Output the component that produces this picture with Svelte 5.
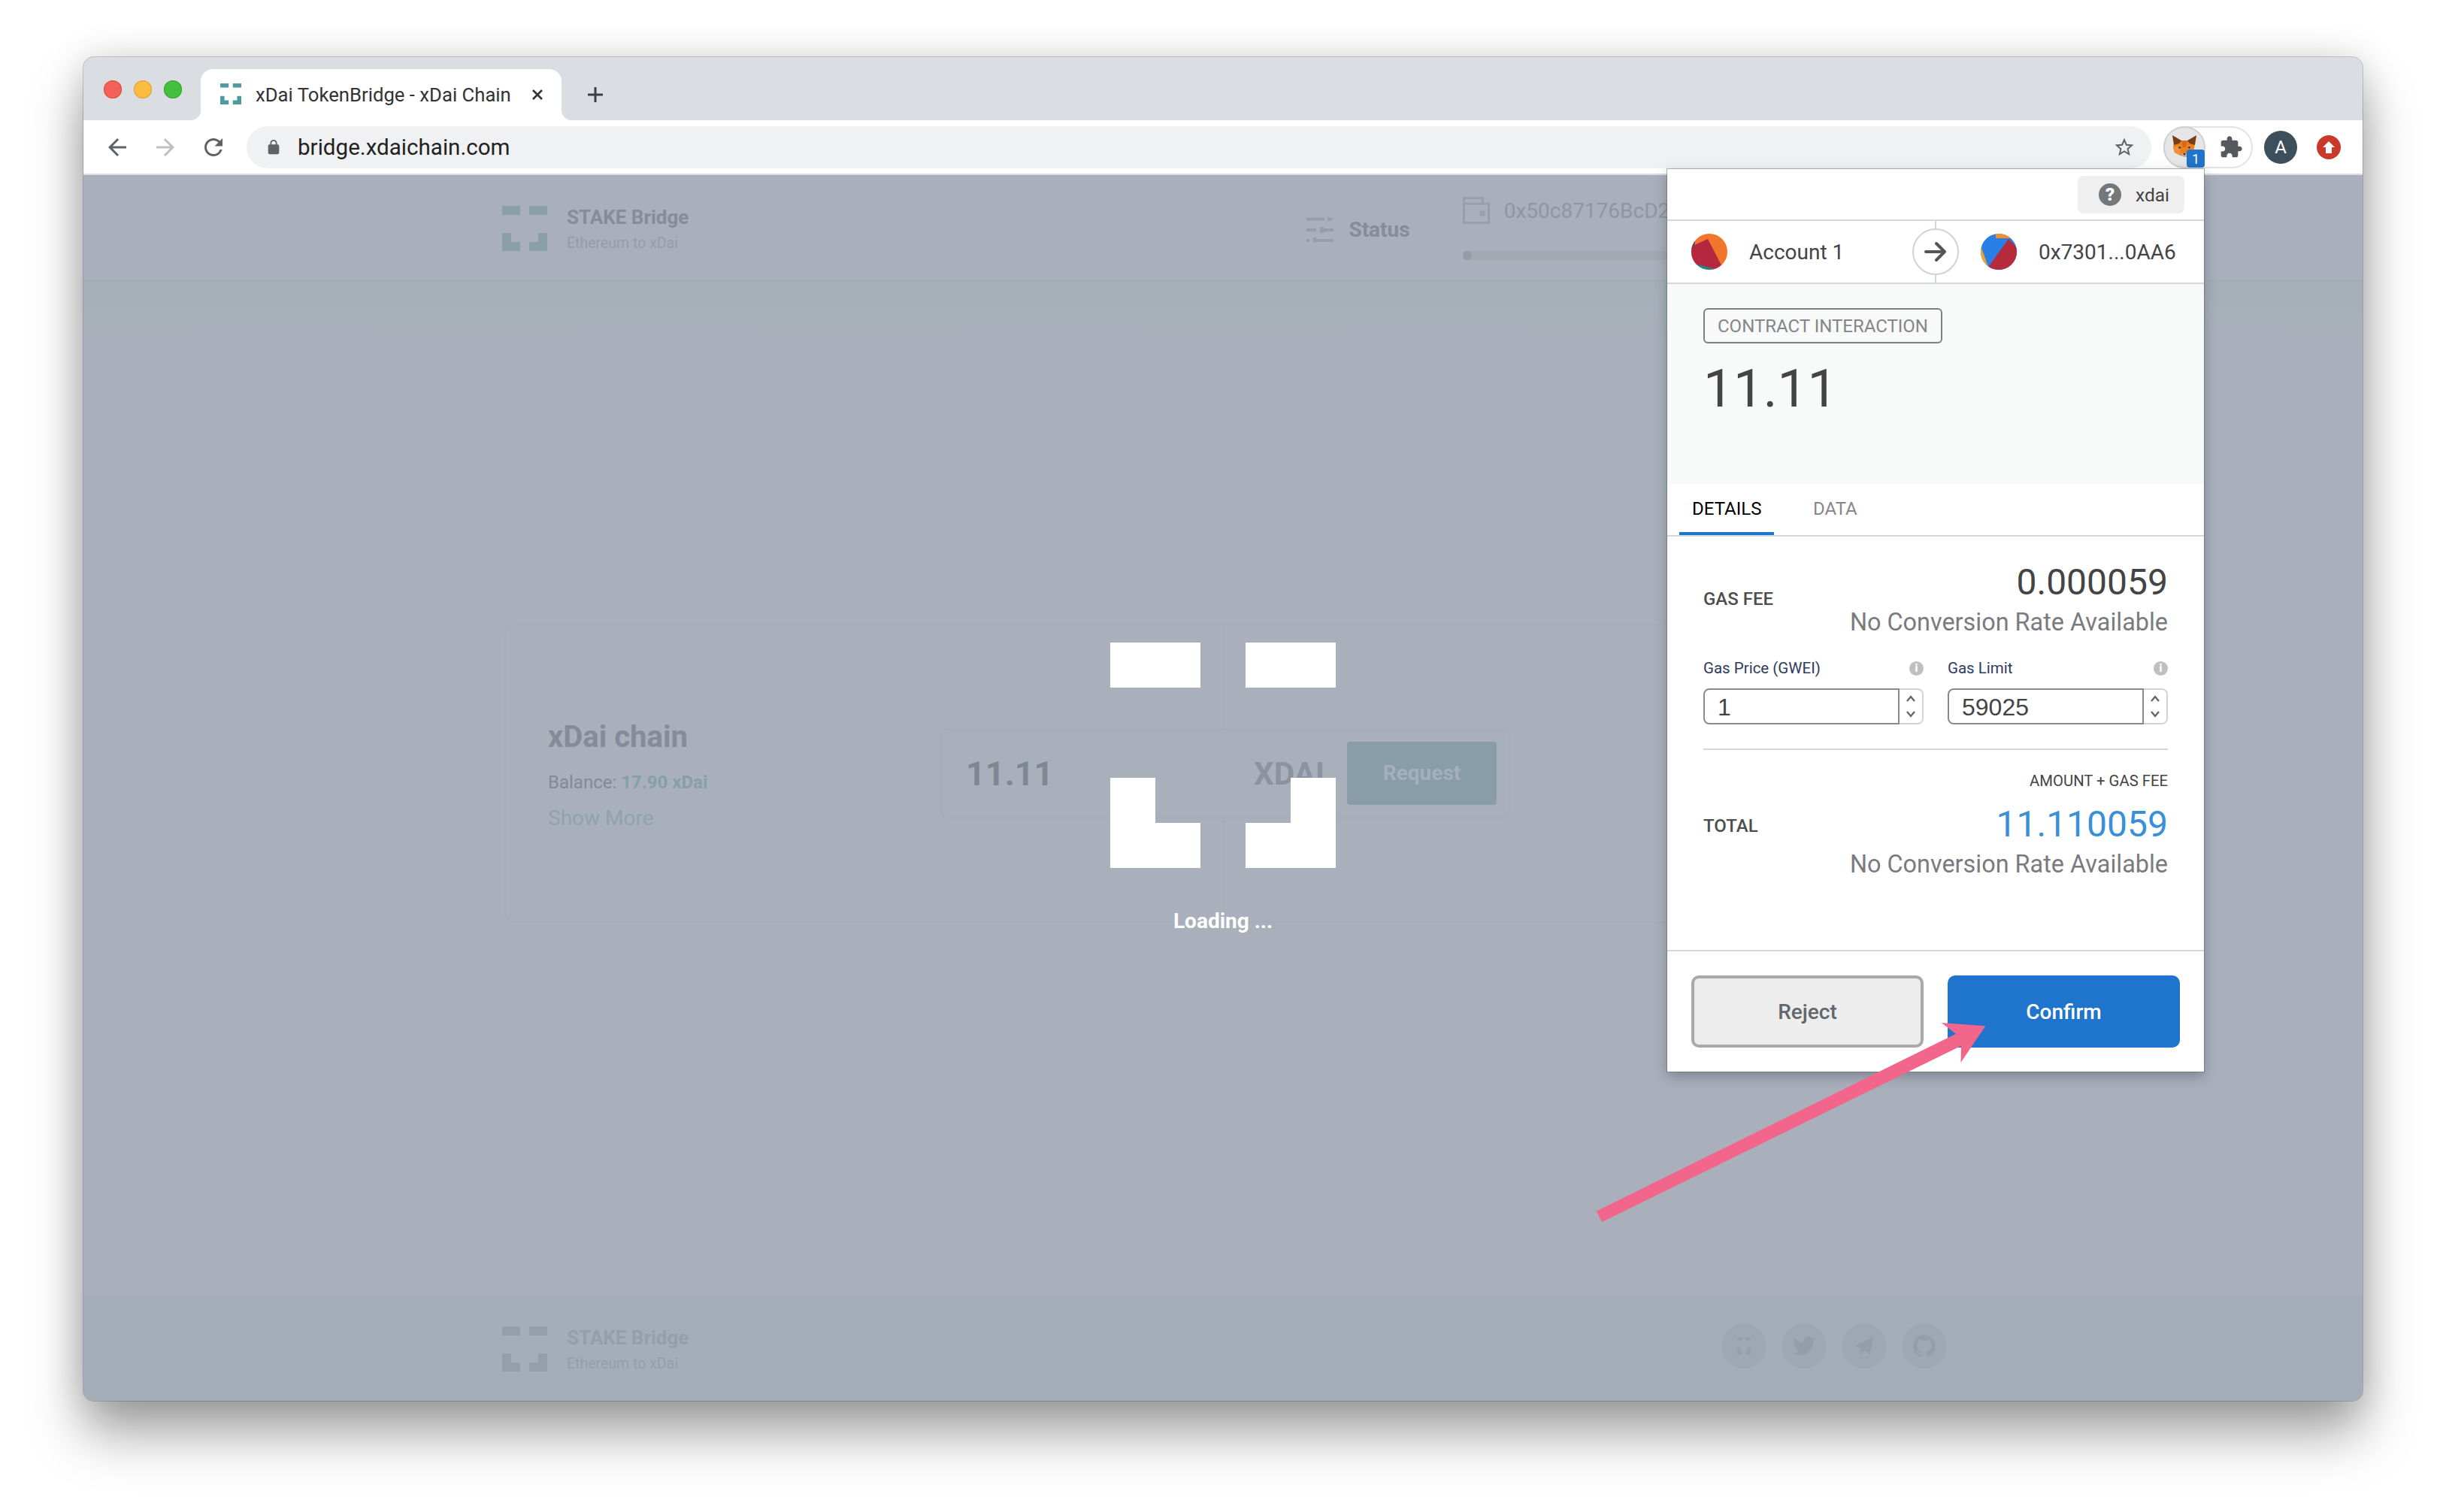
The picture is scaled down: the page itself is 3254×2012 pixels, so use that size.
<script>
	const socials = [
		{ name: 'site', d: 'M5 3h5v3H5zM14 3h5v3h-5zM5 14h3v4h2v3H5zM16 14h3v7h-5v-3h2z' },
		{
			name: 'twitter',
			d: 'M23.953 4.57a10 10 0 01-2.825.775 4.958 4.958 0 002.163-2.723c-.951.555-2.005.959-3.127 1.184a4.92 4.92 0 00-8.384 4.482C7.69 8.095 4.067 6.13 1.64 3.162a4.822 4.822 0 00-.666 2.475c0 1.71.87 3.213 2.188 4.096a4.904 4.904 0 01-2.228-.616v.06a4.923 4.923 0 003.946 4.827 4.996 4.996 0 01-2.212.085 4.936 4.936 0 004.604 3.417 9.867 9.867 0 01-6.102 2.105c-.39 0-.779-.023-1.17-.067a13.995 13.995 0 007.557 2.209c9.053 0 13.998-7.496 13.998-13.985 0-.21 0-.42-.015-.63A9.935 9.935 0 0024 4.59z'
		},
		{ name: 'telegram', d: 'M22 2 2 12l6 2 1 7 3-4 6 4z' },
		{
			name: 'github',
			d: 'M12 .3a12 12 0 0 0-3.8 23.4c.6.1.8-.3.8-.6v-2c-3.3.7-4-1.6-4-1.6-.6-1.4-1.4-1.8-1.4-1.8-1.1-.7.1-.7.1-.7 1.2.1 1.8 1.2 1.8 1.2 1.1 1.8 2.8 1.3 3.5 1 .1-.8.4-1.3.8-1.6-2.7-.3-5.5-1.3-5.5-5.9 0-1.3.5-2.4 1.2-3.2-.1-.3-.5-1.5.1-3.2 0 0 1-.3 3.3 1.2a11.5 11.5 0 0 1 6 0c2.3-1.5 3.3-1.2 3.3-1.2.7 1.7.2 2.9.1 3.2.8.8 1.2 1.9 1.2 3.2 0 4.6-2.8 5.6-5.5 5.9.4.4.8 1.1.8 2.2v3.3c0 .3.2.7.8.6A12 12 0 0 0 12 .3z'
		}
	];
	const gasFields = [
		{ label: 'Gas Price (GWEI)', value: '1' },
		{ label: 'Gas Limit', value: '59025' }
	];
</script>

{#snippet logo(cls)}
	<svg class={cls} viewBox="0 0 5 5" aria-hidden="true">
		<path d="M0 0h2v1H0zM3 0h2v1H3zM0 3h1v1h1v1H0zM4 3h1v2H3V4h1z" />
	</svg>
{/snippet}

{#snippet brand()}
	<div class="brand">
		{@render logo('brand-logo')}
		<div class="brand-text">
			<div class="brand-name">STAKE Bridge</div>
			<div class="brand-sub">Ethereum to xDai</div>
		</div>
	</div>
{/snippet}

<div class="screen">
	<div class="window">
		<div class="tabstrip">
			<div class="lights">
				<span class="light red"></span>
				<span class="light yellow"></span>
				<span class="light green"></span>
			</div>
			<div class="tab">
				{@render logo('favicon')}
				<span class="tab-title">xDai TokenBridge - xDai Chain</span>
				<svg class="tab-close" viewBox="0 0 16 16"><path d="M2 2l12 12M14 2L2 14" /></svg>
			</div>
			<svg class="new-tab" viewBox="0 0 24 24"><path d="M12 2v20M2 12h20" /></svg>
		</div>

		<div class="toolbar">
			<div class="nav">
				<svg viewBox="0 0 24 24"><path d="M20 11H7.83l5.59-5.59L12 4l-8 8 8 8 1.41-1.41L7.83 13H20v-2z" /></svg>
				<svg class="off" viewBox="0 0 24 24"><path d="M4 11h12.17l-5.59-5.59L12 4l8 8-8 8-1.41-1.41L16.17 13H4v-2z" /></svg>
				<svg viewBox="0 0 24 24"><path d="M17.65 6.35A7.958 7.958 0 0 0 12 4c-4.42 0-7.99 3.58-7.99 8s3.57 8 7.99 8c3.73 0 6.84-2.55 7.73-6h-2.08A5.99 5.99 0 0 1 12 18c-3.31 0-6-2.69-6-6s2.69-6 6-6c1.66 0 3.14.69 4.22 1.78L13 11h7V4l-2.35 2.35z" /></svg>
			</div>
			<div class="urlbar">
				<svg class="lock" viewBox="0 0 24 24"><path d="M18 8h-1V6c0-2.76-2.24-5-5-5S7 3.24 7 6v2H6c-1.1 0-2 .9-2 2v10c0 1.1.9 2 2 2h12c1.1 0 2-.9 2-2V10c0-1.1-.9-2-2-2zM9 6c0-1.66 1.34-3 3-3s3 1.34 3 3v2H9V6z" /></svg>
				<span class="url">bridge.xdaichain.com</span>
				<svg class="star" viewBox="0 0 24 24"><path d="M22 9.24l-7.19-.62L12 2 9.19 8.63 2 9.24l5.46 4.73L5.82 21 12 17.27 18.18 21l-1.63-7.03L22 9.24zM12 15.4l-3.76 2.27 1-4.28-3.32-2.88 4.38-.38L12 6.1l1.71 4.04 4.38.38-3.32 2.88 1 4.28L12 15.4z" /></svg>
			</div>
			<div class="ext-pill">
				<div class="fox-wrap">
					<svg class="fox" viewBox="0 0 32 29">
						<polygon fill="#e8821e" points="2,10 12,7 20,7 30,10 29,18 23,25 18,29 11,27 3,23 1,16" />
						<polygon fill="#763d16" points="0,0 12,7 9,11 2,13" />
						<polygon fill="#763d16" points="32,0 20,7 23,11 30,13" />
						<polygon fill="#d7691a" points="12,7 20,7 18,16 14,16" />
						<polygon fill="#f0913a" points="1,16 9,14 11,27 3,23" />
						<polygon fill="#c0ad9e" points="12,24 20,24 18,29 13,28" />
						<polygon fill="#233447" points="14,24 18,24 16,27" />
						<polygon fill="#233447" points="8,15 12,16 9,18" />
						<polygon fill="#233447" points="24,15 20,16 23,18" />
					</svg>
					<span class="ext-badge">1</span>
				</div>
				<svg class="puzzle" viewBox="0 0 24 24"><path d="M20.5 11H19V7c0-1.1-.9-2-2-2h-4V3.5C13 2.12 11.88 1 10.5 1S8 2.12 8 3.5V5H4c-1.1 0-1.99.9-1.99 2v3.8H3.5c1.49 0 2.7 1.21 2.7 2.7s-1.21 2.7-2.7 2.7H2V20c0 1.1.9 2 2 2h3.8v-1.5c0-1.49 1.21-2.7 2.7-2.7 1.49 0 2.7 1.21 2.7 2.7V22H17c1.1 0 2-.9 2-2v-4h1.5c1.38 0 2.5-1.12 2.5-2.5S21.88 11 20.5 11z" /></svg>
			</div>
			<div class="avatar">A</div>
			<svg class="update" viewBox="0 0 32 32">
				<circle cx="16" cy="16" r="16" fill="#c9392a" />
				<polygon fill="#fff" points="16,8 24,16 20,16 20,24 12,24 12,16 8,16" />
			</svg>
		</div>

		<div class="page">
			<header class="site-header">
				{@render brand()}
				<div class="status">
					<svg class="status-icon" viewBox="0 0 36 36">
						<path d="M0 2.500h24v4H0zM28 1l8 3.500-8 3.500zM0 17h13v4H0zM18 15h5v8h-5zM23 17h13v4H23zM0 31h4v4H0zM9 29h4v8H9zM13 31h23v4H13z" />
					</svg>
					<span>Status</span>
				</div>
				<div class="wallet">
					<div class="wallet-row">
						<svg class="wallet-icon" viewBox="0 0 36 36">
							<path d="M1.500 9V1.500h25V9M1.500 9h33v25.500h-33zM24 20h4v4h-4z" />
						</svg>
						<span class="wallet-addr">0x50c87176BcD2...</span>
					</div>
					<div class="wallet-bar"><span class="wallet-knob"></span></div>
				</div>
			</header>

			<main class="content">
				<section class="card">
					<div class="pane left">
						<div class="chain-name">xDai chain</div>
						<div class="balance">Balance: <b>17.90 xDai</b></div>
						<div class="show-more">Show More</div>
					</div>
					<div class="pane right"></div>
					<div class="amount">
						<span class="amount-value">11.11</span>
						<span class="amount-unit">XDAI</span>
						<span class="request">Request</span>
					</div>
				</section>
			</main>

			<footer class="site-footer">
				{@render brand()}
				<div class="socials">
					{#each socials as s}
						<span class="social">
							<svg viewBox="0 0 24 24"><path d={s.d} /></svg>
						</span>
					{/each}
				</div>
			</footer>

			<div class="loader">
				{@render logo('loader-logo')}
				<div class="loader-text">Loading ...</div>
			</div>
		</div>

		<div class="popup">
			<div class="popup-top">
				<div class="network">
					<span class="network-q">?</span>
					<span>xdai</span>
				</div>
			</div>
			<div class="accounts">
				<div class="account">
					<svg class="identicon" viewBox="0 0 48 48">
						<rect width="48" height="48" fill="#f1752a" />
						<polygon fill="#17636e" points="0,14 5,10 4,18 0,20" />
						<polygon fill="#25848c" points="4,38 34,44 30,48 8,48" />
						<polygon fill="#b5263f" points="0,17 22,7 40,42 32,47 5,40 0,34" />
					</svg>
					<span>Account 1</span>
				</div>
				<div class="flow">
					<span class="flow-circle">
						<svg viewBox="0 0 30 30"><path d="M2 15h25M16 4l11 11-11 11" /></svg>
					</span>
				</div>
				<div class="account">
					<svg class="identicon" viewBox="0 0 48 48">
						<rect width="48" height="48" fill="#2a7fe6" />
						<polygon fill="#f29029" points="20,0 40,0 40,6 20,6" />
						<polygon fill="#f0a52a" points="0,16 10,44 0,44" />
						<polygon fill="#b52b3c" points="37,7 48,18 48,48 8,48 11,43" />
					</svg>
					<span>0x7301...0AA6</span>
				</div>
			</div>
			<div class="summary">
				<div class="tag">CONTRACT INTERACTION</div>
				<div class="summary-amount">11.11</div>
			</div>
			<div class="tabs">
				<div class="tab-item active">DETAILS</div>
				<div class="tab-item">DATA</div>
			</div>
			<div class="details">
				<div class="fee-row">
					<div class="fee-label">GAS FEE</div>
					<div class="fee-values">
						<div class="fee-amount">0.000059</div>
						<div class="fee-note">No Conversion Rate Available</div>
					</div>
				</div>
				<div class="gas-fields">
					{#each gasFields as f}
						<div class="gas-field">
							<div class="gas-label">
								<span>{f.label}</span>
								<span class="info">i</span>
							</div>
							<div class="stepper">
								<input value={f.value} readonly />
								<span class="spin">
									<svg viewBox="0 0 14 12"><path d="M2 9l5-6 5 6" /></svg>
									<svg viewBox="0 0 14 12"><path d="M2 3l5 6 5-6" /></svg>
								</span>
							</div>
						</div>
					{/each}
				</div>
				<div class="rule"></div>
				<div class="total-sub">AMOUNT + GAS FEE</div>
				<div class="fee-row total">
					<div class="fee-label">TOTAL</div>
					<div class="fee-values">
						<div class="fee-amount blue">11.110059</div>
						<div class="fee-note">No Conversion Rate Available</div>
					</div>
				</div>
			</div>
			<div class="actions">
				<button class="btn reject">Reject</button>
				<button class="btn confirm">Confirm</button>
			</div>
		</div>

		<svg class="arrow" viewBox="111 76 3032 1788">
			<polygon
				fill="#f2668b"
				points="2123.600,1611.700 2602,1375.700 2582.700,1361 2641.400,1365.300 2608.500,1414 2609,1391.700 2131.300,1626"
			/>
		</svg>
	</div>
</div>

<style>
	:global(body) {
		background: #fff;
		font-family: Roboto, 'Liberation Sans', sans-serif;
	}

	.screen {
		height: 2012px;
		box-sizing: border-box;
		padding: 76px 0 0 111px;
		overflow: hidden;
	}

	.window {
		position: relative;
		display: flex;
		flex-direction: column;
		width: 3032px;
		height: 1788px;
		border-radius: 14px;
		box-shadow: 0 0 0 1px rgba(0, 0, 0, 0.18), 0 44px 70px rgba(0, 0, 0, 0.36), 0 0 50px rgba(0, 0, 0, 0.14);
		background: #a9b0bb;
		overflow: hidden;
	}

	.tabstrip {
		display: flex;
		align-items: flex-end;
		height: 84px;
		background: #dadde1;
		flex: none;
	}
	.lights {
		display: flex;
		gap: 16px;
		align-self: flex-start;
		margin: 31px 0 0 27px;
	}
	.light {
		width: 24px;
		height: 24px;
		border-radius: 50%;
	}
	.red {
		background: #f46158;
		box-shadow: inset 0 0 0 1px #dd4b43;
	}
	.yellow {
		background: #fbbc42;
		box-shadow: inset 0 0 0 1px #e0a030;
	}
	.green {
		background: #45c03e;
		box-shadow: inset 0 0 0 1px #33a42e;
	}
	.tab {
		position: relative;
		display: flex;
		align-items: center;
		width: 480px;
		height: 68px;
		margin-left: 25px;
		padding-left: 26px;
		box-sizing: border-box;
		background: #fff;
		border-radius: 16px 16px 0 0;
	}
	.tab::before,
	.tab::after {
		content: '';
		position: absolute;
		bottom: 0;
		width: 14px;
		height: 14px;
	}
	.tab::before {
		left: -14px;
		background: radial-gradient(circle at 0 0, transparent 14px, #fff 14.500px);
	}
	.tab::after {
		right: -14px;
		background: radial-gradient(circle at 100% 0, transparent 14px, #fff 14.500px);
	}
	.favicon {
		width: 28px;
		height: 28px;
		fill: #4f9a9e;
		margin-bottom: 2px;
		flex: none;
	}
	.tab-title {
		margin-left: 19px;
		font-size: 25.700px;
		color: #333;
		white-space: nowrap;
	}
	.tab-close {
		width: 16px;
		height: 16px;
		margin-left: auto;
		margin-right: 24px;
		fill: none;
		stroke: #333;
		stroke-width: 2.600;
	}
	.new-tab {
		width: 24px;
		height: 24px;
		margin: 0 0 22px 33px;
		fill: none;
		stroke: #3c4043;
		stroke-width: 3;
	}

	.toolbar {
		display: flex;
		align-items: center;
		flex: none;
		height: 73px;
		box-sizing: border-box;
		padding: 0 29px 0 0;
		background: #fff;
		border-bottom: 2px solid #dcdcdc;
	}
	.nav {
		display: flex;
		margin-left: 13px;
	}
	.nav svg {
		width: 36px;
		height: 36px;
		margin: 0 14px;
		fill: #5f6368;
	}
	.nav svg.off {
		fill: #bdc1c6;
	}
	.urlbar {
		display: flex;
		align-items: center;
		flex: 1;
		height: 56px;
		margin-left: 12px;
		padding: 0 21px 0 25px;
		background: #f0f1f3;
		border-radius: 28px;
	}
	.lock {
		width: 22px;
		height: 22px;
		fill: #5f6368;
	}
	.url {
		margin-left: 21px;
		font-size: 29.600px;
		color: #222;
	}
	.star {
		width: 30px;
		height: 30px;
		margin-left: auto;
		fill: #5f6368;
	}
	.ext-pill {
		display: flex;
		align-items: center;
		width: 119px;
		height: 56px;
		box-sizing: border-box;
		margin-left: 16px;
		border: 2px solid #e3e3e3;
		border-radius: 28px;
	}
	.fox-wrap {
		position: relative;
		display: flex;
		align-items: center;
		justify-content: center;
		width: 56px;
		height: 56px;
		margin-left: -2px;
		box-sizing: border-box;
		background: #e6e6e6;
		border: 2px solid #cfcfcf;
		border-radius: 50%;
		flex: none;
	}
	.fox {
		width: 32px;
		height: 29px;
		margin-bottom: 2px;
	}
	.ext-badge {
		position: absolute;
		right: -1px;
		bottom: -1px;
		width: 24px;
		height: 24px;
		background: #1f74cd;
		border-radius: 4px;
		color: #fff;
		font-size: 18px;
		line-height: 26px;
		text-align: center;
	}
	.puzzle {
		width: 32px;
		height: 32px;
		margin-left: 18px;
		fill: #55585d;
	}
	.avatar {
		width: 44px;
		height: 44px;
		margin-left: 15px;
		border-radius: 50%;
		background: #3d4f5a;
		color: #fff;
		font-size: 24px;
		line-height: 44px;
		text-align: center;
	}
	.update {
		width: 32px;
		height: 32px;
		margin-left: 26px;
	}

	.page {
		position: relative;
		display: flex;
		flex-direction: column;
		flex: 1;
		min-height: 0;
	}
	.site-header {
		display: flex;
		align-items: center;
		flex: none;
		height: 142px;
		box-sizing: border-box;
		padding: 6px 0 0 557px;
		border-bottom: 2px solid #a3adb6;
	}
	.brand {
		display: flex;
		gap: 26px;
		align-items: flex-start;
	}
	.brand-logo {
		width: 60px;
		height: 60px;
		fill: #8b9fa9;
	}
	.brand-text {
		display: flex;
		flex-direction: column;
		gap: 5px;
	}
	.brand-name {
		font-size: 26px;
		line-height: 30px;
		font-weight: 700;
		color: #868c98;
	}
	.brand-sub {
		font-size: 19.500px;
		line-height: 30px;
		color: #959ca8;
	}
	.status {
		display: flex;
		align-items: center;
		gap: 20px;
		margin: 0 0 2px 822px;
		font-size: 28px;
		font-weight: 700;
		color: #868c98;
	}
	.status-icon {
		width: 36px;
		height: 36px;
		fill: #979eaa;
	}
	.wallet {
		display: flex;
		flex-direction: column;
		gap: 36px;
		width: 639px;
		margin: 0 0 4px 70px;
	}
	.wallet-row {
		display: flex;
		align-items: center;
		gap: 19px;
	}
	.wallet-icon {
		width: 36px;
		height: 36px;
		fill: none;
		stroke: #979fab;
		stroke-width: 3;
	}
	.wallet-addr {
		font-size: 28px;
		color: #8f96a2;
		white-space: nowrap;
	}
	.wallet-bar {
		height: 12px;
		border-radius: 6px;
		background: #a2a9b3;
	}
	.wallet-knob {
		display: block;
		width: 12px;
		height: 12px;
		border-radius: 50%;
		background: #949ca8;
	}

	.content {
		flex: 1;
		background: linear-gradient(#a6b0b9, #a9b0bb 80px);
	}
	.card {
		display: grid;
		grid-template-columns: 1fr 1fr;
		width: 1915px;
		height: 398px;
		box-sizing: border-box;
		margin: 455px 0 0 560px;
		border: 2px solid #a5aeb8;
		border-radius: 16px;
	}
	.pane {
		grid-row: 1;
	}
	.left {
		grid-column: 1;
		display: flex;
		flex-direction: column;
		justify-content: center;
		padding: 6px 0 0 56px;
		border-right: 2px solid #a5aeb8;
	}
	.right {
		grid-column: 2;
	}
	.chain-name {
		font-size: 40px;
		line-height: 46px;
		font-weight: 700;
		color: #858c98;
	}
	.balance {
		margin-top: 20px;
		font-size: 24px;
		line-height: 34px;
		color: #838a96;
	}
	.balance b {
		color: #85a0a8;
	}
	.show-more {
		margin-top: 14px;
		font-size: 28px;
		line-height: 34px;
		color: #8ea3ab;
	}
	.amount {
		grid-row: 1;
		grid-column: 1 / 3;
		justify-self: center;
		align-self: center;
		display: flex;
		align-items: center;
		width: 757px;
		height: 119px;
		box-sizing: border-box;
		margin-left: 4px;
		padding: 0 16px 0 31px;
		border: 2px solid #a4adb7;
		border-radius: 8px;
		background: #a9b0bb;
		z-index: 1;
	}
	.amount-value {
		font-size: 45px;
		font-weight: 700;
		color: #7f8793;
	}
	.amount-unit {
		margin-left: auto;
		margin-right: 30px;
		font-size: 42px;
		font-weight: 700;
		color: #8c93a0;
	}
	.request {
		width: 199px;
		height: 84px;
		background: #889da8;
		border-radius: 4px;
		color: #a4b0bb;
		font-size: 28px;
		font-weight: 700;
		line-height: 84px;
		text-align: center;
	}

	.site-footer {
		display: flex;
		align-items: center;
		flex: none;
		height: 140px;
		box-sizing: border-box;
		padding: 6px 0 0 557px;
		background: #a4aeb8;
	}
	.site-footer .brand-logo {
		fill: #959eab;
	}
	.site-footer .brand-name,
	.site-footer .brand-sub {
		color: #959eab;
	}
	.socials {
		display: flex;
		gap: 20px;
		margin: 0 0 12px 1374px;
	}
	.social {
		display: flex;
		align-items: center;
		justify-content: center;
		width: 60px;
		height: 60px;
		border-radius: 50%;
		background: #9ea8b3;
	}
	.social svg {
		width: 30px;
		height: 30px;
		fill: #949eab;
	}

	.loader {
		position: absolute;
		inset: 0;
		display: flex;
		flex-direction: column;
		align-items: center;
		justify-content: center;
		z-index: 2;
	}
	.loader-logo {
		width: 300px;
		height: 300px;
		fill: #fff;
	}
	.loader-text {
		margin-top: 54px;
		font-size: 28px;
		line-height: 34px;
		font-weight: 700;
		color: #fff;
	}

	.popup {
		position: absolute;
		left: 2107px;
		top: 149px;
		width: 714px;
		height: 1201px;
		display: flex;
		flex-direction: column;
		background: #fff;
		box-shadow: 0 0 0 1px rgba(90, 100, 110, 0.5), 0 6px 16px rgba(40, 50, 60, 0.35);
		z-index: 3;
		color: #444;
	}
	.popup-top {
		display: flex;
		justify-content: flex-end;
		align-items: flex-start;
		flex: none;
		height: 69px;
		box-sizing: border-box;
		padding: 9px 26px 0 0;
		border-bottom: 2px solid #d2d8dd;
	}
	.network {
		display: flex;
		align-items: center;
		gap: 19px;
		width: 142px;
		height: 50px;
		box-sizing: border-box;
		padding-left: 28px;
		background: #efefef;
		border-radius: 8px;
		font-size: 24.500px;
	}
	.network-q {
		width: 30px;
		height: 30px;
		border-radius: 50%;
		background: #74787b;
		color: #fff;
		font-size: 24px;
		font-weight: 900;
		line-height: 31px;
		text-align: center;
	}
	.accounts {
		display: grid;
		grid-template-columns: 1fr 62px 1fr;
		flex: none;
		height: 84px;
		box-sizing: border-box;
		border-bottom: 2px solid #d2d8dd;
	}
	.account {
		display: flex;
		align-items: center;
		gap: 29px;
		padding-left: 32px;
		font-size: 28px;
	}
	.account:last-child {
		padding-left: 29px;
		gap: 29px;
	}
	.identicon {
		width: 48px;
		height: 48px;
		border-radius: 50%;
		flex: none;
	}
	.flow {
		display: flex;
		align-items: center;
		background: linear-gradient(#d2d8dd, #d2d8dd) center / 2px 100% no-repeat;
	}
	.flow-circle {
		display: flex;
		align-items: center;
		justify-content: center;
		width: 62px;
		height: 62px;
		box-sizing: border-box;
		border: 2px solid #cdd3d9;
		border-radius: 50%;
		background: #fff;
	}
	.flow-circle svg {
		width: 30px;
		height: 30px;
		fill: none;
		stroke: #555;
		stroke-width: 4;
		stroke-linecap: round;
		stroke-linejoin: round;
	}
	.summary {
		flex: none;
		height: 266px;
		box-sizing: border-box;
		padding: 32px 0 0 48px;
		background: #f8f9f9;
	}
	.tag {
		display: inline-block;
		height: 47px;
		box-sizing: border-box;
		padding: 0 17px;
		border: 2px solid #7f8083;
		border-radius: 6px;
		color: #85868a;
		font-size: 24px;
		line-height: 44px;
	}
	.summary-amount {
		margin-top: 18px;
		font-size: 71px;
		line-height: 84px;
		color: #444;
	}
	.tabs {
		display: flex;
		flex: none;
		height: 70px;
		box-sizing: border-box;
		padding-left: 16px;
		border-bottom: 2px solid #d2d8dd;
	}
	.tab-item {
		padding: 0 17px;
		margin-right: 35px;
		font-size: 24px;
		line-height: 66px;
		color: #85868a;
	}
	.tab-item.active {
		width: 126px;
		box-sizing: border-box;
		margin-right: 35px;
		color: #000;
		white-space: nowrap;
		border-bottom: 4px solid #1f74cd;
	}
	.details {
		flex: 1;
		padding: 33px 48px 0 48px;
	}
	.fee-row {
		display: flex;
		justify-content: space-between;
		align-items: center;
	}
	.fee-label {
		margin-bottom: 6px;
		font-size: 24px;
		font-weight: 500;
		color: #4d4d4d;
	}
	.fee-values {
		text-align: right;
	}
	.fee-amount {
		font-size: 48px;
		line-height: 56px;
		color: #444;
	}
	.fee-amount.blue {
		color: #3a90d8;
	}
	.fee-note {
		font-size: 32.400px;
		line-height: 50px;
		color: #7a7b80;
	}
	.gas-fields {
		display: grid;
		grid-template-columns: 293px 293px;
		gap: 32px;
		margin-top: 24px;
	}
	.gas-label {
		display: flex;
		justify-content: space-between;
		align-items: center;
		font-size: 20.500px;
		line-height: 24px;
		color: #2f3a5f;
	}
	.info {
		width: 19px;
		height: 19px;
		border-radius: 50%;
		background: #c0c0c0;
		color: #fff;
		font-size: 14px;
		font-weight: 900;
		line-height: 19px;
		text-align: center;
	}
	.stepper {
		display: flex;
		height: 48px;
		margin-top: 15px;
	}
	.stepper input {
		flex: 1;
		min-width: 0;
		box-sizing: border-box;
		padding: 2px 0 0 17px;
		border: 2px solid #8b8b8b;
		border-radius: 8px 0 0 8px;
		font-family: 'Liberation Sans', sans-serif;
		font-size: 32px;
		color: #444;
		outline: none;
		background: #fff;
	}
	.spin {
		display: flex;
		flex-direction: column;
		align-items: center;
		justify-content: center;
		gap: 8px;
		width: 32px;
		box-sizing: border-box;
		border: 2px solid #d4d4d4;
		border-left: none;
		border-radius: 0 8px 8px 0;
	}
	.spin svg {
		width: 14px;
		height: 12px;
		fill: none;
		stroke: #666;
		stroke-width: 2.400;
	}
	.rule {
		height: 2px;
		margin-top: 32px;
		background: #d2d8dd;
	}
	.total-sub {
		margin-top: 29px;
		font-size: 20.300px;
		line-height: 24px;
		text-align: right;
		color: #444;
	}
	.total {
		margin-top: 18px;
		align-items: flex-start;
	}
	.total .fee-label {
		margin: 2px 0 0;
		line-height: 56px;
	}
	.actions {
		display: flex;
		gap: 32px;
		flex: none;
		height: 162px;
		box-sizing: border-box;
		padding: 32px 32px 0;
		border-top: 2px solid #d2d8dd;
	}
	.btn {
		width: 309px;
		height: 96px;
		box-sizing: border-box;
		border-radius: 10px;
		font-family: inherit;
		font-size: 28px;
		font-weight: 500;
	}
	.reject {
		border: 4px solid #a9a9a9;
		background: #ededed;
		color: #62676d;
	}
	.confirm {
		border: none;
		background: #1f74cd;
		color: #fff;
	}

	.arrow {
		position: absolute;
		left: 0;
		top: 0;
		width: 3032px;
		height: 1788px;
		z-index: 4;
		pointer-events: none;
	}
</style>
